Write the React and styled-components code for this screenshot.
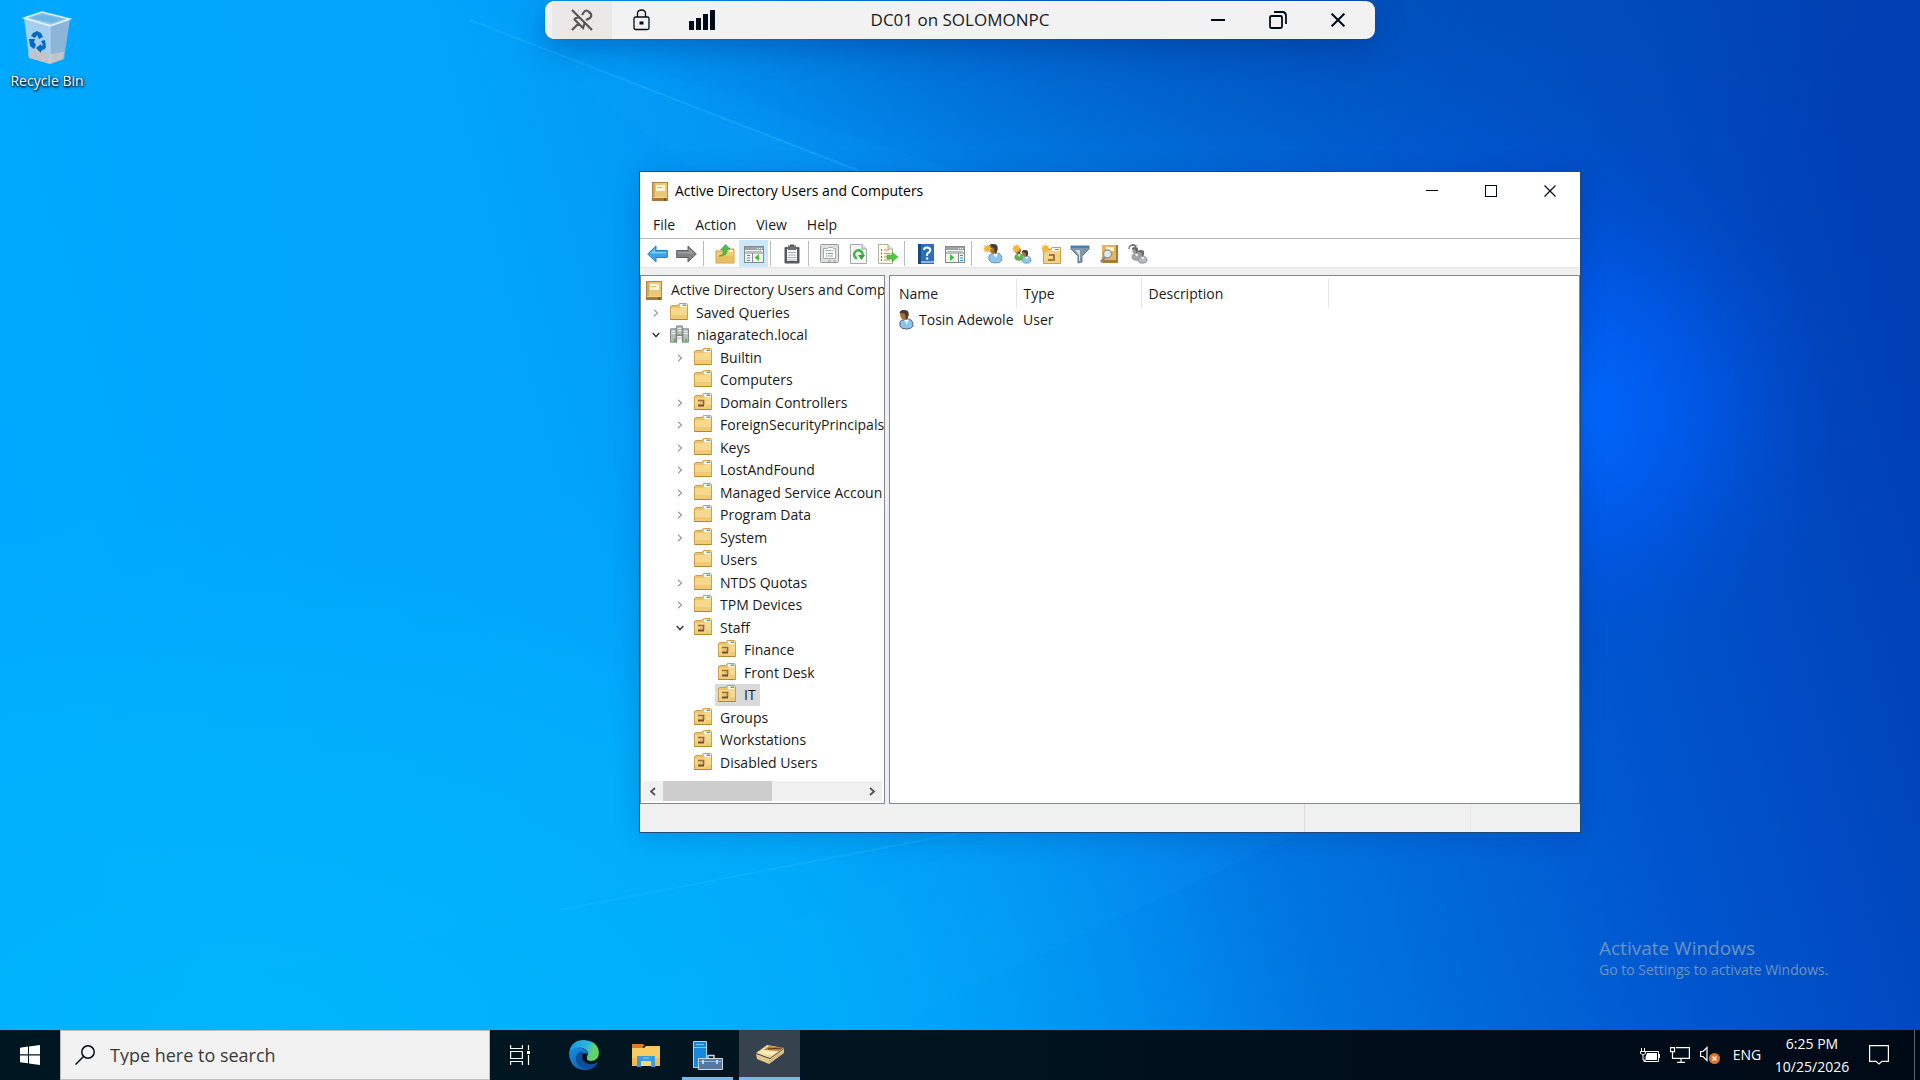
import React from "react"
import styled, { createGlobalStyle } from "styled-components"

const GlobalStyle = createGlobalStyle`
  * {
    box-sizing: border-box;
  }

  body {
    margin: 0;
    font-family: "Open Sans", "Noto Sans", sans-serif;
    font-size: 14px;
    line-height: 20px;
    color: #1a1a1a;
  }

  button,
  input {
    font: inherit;
    color: inherit;
    border: 0;
    padding: 0;
    margin: 0;
    background: none;
  }

  svg {
    display: block;
    flex: none;
  }
`

/* desktop */

const Desktop = styled.div`
  display: flex;
  flex-direction: column;
  height: 100vh;
  overflow: hidden;
  background: #0078e0;
`

const Canvas = styled.main`
  position: relative;
  flex: 1;
`

const WallpaperSvg = styled.svg`
  position: absolute;
  inset: 0;
  width: 100%;
  height: 100%;
`

const Shortcut = styled.button`
  position: absolute;
  left: 2px;
  top: 9px;
  width: 90px;
  display: flex;
  flex-direction: column;
  align-items: center;
  gap: 6px;
  color: #fff;
  text-shadow: 0 1px 2px #000, 1px 1px 3px #001c40;
`

const Watermark = styled.div`
  position: absolute;
  right: 84px;
  bottom: 50px;
  width: 237px;
  color: #6d93bb;
`

const WatermarkTitle = styled.div`
  font-size: 19px;
  line-height: 24px;
`

const WatermarkText = styled.div`
  white-space: nowrap;
`

/* connection bar */

const ConnectionBar = styled.header`
  position: absolute;
  top: 1px;
  left: 0;
  right: 0;
  margin: 0 auto;
  width: 830px;
  height: 38px;
  padding: 0 7px;
  display: flex;
  align-items: stretch;
  border-radius: 9px;
  background: #f2f2f2;
  box-shadow: 0 0 1px #234a80, 0 10px 30px rgba(0, 40, 120, 0.35);
`

const BarButton = styled.button`
  width: 60px;
  display: flex;
  align-items: center;
  justify-content: center;
  background: ${props => (props.$active ? "#eae9e8" : "none")};
`

const BarTitle = styled.div`
  flex: 1;
  text-align: center;
  font-size: 17px;
  line-height: 38px;
`

/* console window */

const Window = styled.section`
  position: absolute;
  left: 639px;
  top: 171px;
  width: 942px;
  height: 662px;
  display: flex;
  flex-direction: column;
  border: 1px solid #1c4a7c;
  background: #f0f0f0;
  box-shadow: 0 4px 24px rgba(0, 30, 90, 0.2);
`

const TitleBar = styled.div`
  display: flex;
  align-items: center;
  height: 38px;
  padding: 0 1px 0 12px;
  background: #fff;
  color: #000;
`

const TitleText = styled.h1`
  flex: 1;
  margin: 0 0 0 6px;
  font-size: 14px;
  font-weight: 400;
`

const WindowButton = styled.button`
  width: 59px;
  height: 38px;
  display: flex;
  align-items: center;
  justify-content: center;
`

const MenuBar = styled.nav`
  display: flex;
  gap: 20px;
  height: 29px;
  padding: 5px 13px 3px;
  background: #fff;
  border-bottom: 1px solid #b9b9b9;
`

const ToolBar = styled.div`
  display: flex;
  align-items: center;
  height: 29px;
  padding: 1px 0 0 3px;
  background: #fff;
  border-bottom: 1px solid #e4e4e4;
`

const ToolButton = styled.button`
  width: 29px;
  height: 27px;
  display: flex;
  align-items: center;
  justify-content: center;
  background: ${props => (props.$active ? "#cbe8f8" : "none")};
`

const Separator = styled.span`
  width: 1px;
  height: 25px;
  margin: 0 6px 0 2px;
  background: #b8bcc0;
`

const Panes = styled.div`
  flex: 1;
  min-height: 0;
  display: grid;
  grid-template-columns: 245px 1fr;
  gap: 4px;
  padding-top: 7px;
`

const Pane = styled.div`
  display: flex;
  flex-direction: column;
  min-width: 0;
  background: #fff;
  border: 1px solid #828790;
  padding: 2px 0 2px 2px;
`

const Tree = styled.ul`
  display: grid;
  grid-auto-rows: 1fr;
  height: 495px;
  margin: 1px 0 auto;
  padding: 0;
  list-style: none;
  overflow: hidden;
`

const TreeRow = styled.li`
  display: flex;
  align-items: center;
  padding-left: ${props => Math.max(0, props.$level - 1) * 24}px;
`

const Expander = styled.button`
  width: 24px;
  height: 20px;
  padding-left: 2px;
  display: flex;
  align-items: center;
  justify-content: center;
  flex: none;
`

const TreeItem = styled.button`
  display: flex;
  align-items: center;
  gap: 8px;
  height: 22px;
  padding: 0 4px 0 3px;
  white-space: nowrap;
  background: ${props => (props.$selected ? "#d9d9d9" : "none")};
`

const ScrollBar = styled.div`
  display: flex;
  height: 20px;
  margin-right: 2px;
  background: #f0f0f0;
`

const ScrollButton = styled.button`
  width: 20px;
  display: flex;
  align-items: center;
  justify-content: center;
`

const ScrollTrack = styled.div`
  flex: 1;
`

const ScrollThumb = styled.div`
  width: 55%;
  height: 100%;
  background: #cdcdcd;
`

const List = styled.table`
  width: 436px;
  table-layout: fixed;
  border-collapse: collapse;
  white-space: nowrap;
`

const HeadCell = styled.th`
  width: ${props => props.$width}px;
  height: 30px;
  padding: 2px 0 0 7px;
  font-weight: 400;
  text-align: left;
  border-right: 1px solid #e5e5e5;
`

const Cell = styled.td`
  height: 24px;
  padding: 0 0 0 7px;
`

const NameCell = styled.div`
  display: flex;
  align-items: center;
  gap: 3px;
`

const StatusBar = styled.footer`
  display: grid;
  grid-template-columns: 1fr 166px 109px;
  height: 28px;
`

const StatusCell = styled.div`
  border-right: 1px solid ${props => (props.$faint ? "#e9e9e9" : "#dcdcdc")};

  &:last-child {
    border-right: 0;
  }
`

/* taskbar */

const TaskBar = styled.footer`
  display: flex;
  height: 50px;
  background: linear-gradient(90deg, #001722 0%, #001520 45%, #000c1a 80%, #000a17 100%);
  color: #fff;
`

const StartButton = styled.button`
  width: 60px;
  display: flex;
  align-items: center;
  justify-content: center;
`

const TaskViewButton = styled(StartButton)`
  width: 63px;
  padding-right: 3px;
`

const Search = styled.label`
  display: flex;
  align-items: center;
  gap: 15px;
  width: 430px;
  padding-left: 14px;
  background: #f2f2f2;
  border: 1px solid #bdbdbd;
`

const SearchInput = styled.input`
  flex: 1;
  min-width: 0;
  font-size: 18px;
  outline: 0;

  &::placeholder {
    color: #3a3a3a;
    opacity: 1;
  }
`

const TaskButton = styled.button`
  width: 61px;
  margin-right: 1px;
  display: flex;
  align-items: center;
  justify-content: center;
  background-color: ${props => (props.$active ? "#36434e" : "transparent")};
  background-image: ${props => (props.$open ? "linear-gradient(#76b9ed, #76b9ed)" : "none")};
  background-size: ${props => (props.$active ? "100%" : "51px")} 3px;
  background-position: bottom center;
  background-repeat: no-repeat;
`

const Tray = styled.div`
  display: flex;
  align-items: center;
  margin-left: auto;
`

const TrayButton = styled.button`
  width: 30px;
  height: 50px;
  display: flex;
  align-items: center;
  justify-content: center;
`

const Language = styled.button`
  width: 44px;
  height: 50px;
`

const Clock = styled.button`
  width: 86px;
  height: 50px;
  line-height: 23px;
`

const ActionCenter = styled.button`
  width: 59px;
  height: 50px;
  display: flex;
  align-items: center;
  padding-left: 14px;
`

const ShowDesktop = styled.button`
  width: 6px;
  height: 50px;
  border-left: 1px solid #5a646c;
`

/* drawings */

const Wallpaper = () => (
  <WallpaperSvg viewBox="0 0 1920 1030" preserveAspectRatio="none" aria-hidden="true">
    <defs>
      <linearGradient id="base" x1="0" y1="0.5" x2="1" y2="0.36">
        <stop offset="0" stopColor="#00a9ff" />
        <stop offset="0.3" stopColor="#00a3fb" />
        <stop offset="0.45" stopColor="#008ff0" />
        <stop offset="0.62" stopColor="#0074e0" />
        <stop offset="0.8" stopColor="#0056cf" />
        <stop offset="1" stopColor="#003eb4" />
      </linearGradient>
      <radialGradient id="corner" cx="0.13" cy="1" r="0.55">
        <stop offset="0" stopColor="#00b6fc" />
        <stop offset="0.6" stopColor="#00b2fc" stopOpacity="0.6" />
        <stop offset="1" stopColor="#00a8ff" stopOpacity="0" />
      </radialGradient>
      <radialGradient id="glow" gradientUnits="userSpaceOnUse" cx="1575" cy="410" r="270">
        <stop offset="0" stopColor="#0068ff" />
        <stop offset="0.45" stopColor="#005cf2" stopOpacity="0.7" />
        <stop offset="1" stopColor="#004cd0" stopOpacity="0" />
      </radialGradient>
      <radialGradient id="shade" gradientUnits="userSpaceOnUse" cx="1300" cy="0" r="700" gradientTransform="matrix(1 0 0 0.3 0 0)">
        <stop offset="0" stopColor="#0048b0" stopOpacity="0.7" />
        <stop offset="1" stopColor="#0050b4" stopOpacity="0" />
      </radialGradient>
      <linearGradient id="beam" x1="0" y1="0" x2="1" y2="0">
        <stop offset="0" stopColor="#20b4ff" stopOpacity="0" />
        <stop offset="0.6" stopColor="#18a8ff" stopOpacity="0.22" />
        <stop offset="1" stopColor="#1898ff" stopOpacity="0.3" />
      </linearGradient>
    </defs>
    <rect width="1920" height="1030" fill="url(#base)" />
    <rect width="1920" height="1030" fill="url(#corner)" />
    <rect width="1920" height="1030" fill="url(#shade)" />
    <path d="M440 0 L1500 350 L1500 700 L0 1030 L0 0Z" fill="url(#beam)" opacity="0.4" />
    <path d="M480 20 L860 171 L1500 400 L700 171Z" fill="url(#beam)" />
    <path d="M470 20 L860 171" stroke="#30b4ff" strokeOpacity="0.35" strokeWidth="2" />
    <path d="M540 1030 L1000 833 L1300 833 L880 1030Z" fill="url(#beam)" opacity="0.4" />
    <path d="M560 910 L960 833" stroke="#30c0ff" strokeOpacity="0.25" strokeWidth="2" />
    <rect width="1920" height="1030" fill="url(#glow)" />
  </WallpaperSvg>
)

const RecycleBin = () => (
  <svg width="50" height="56" viewBox="0 0 50 56">
    <path d="M2 9 L20 3 L48 10 L30 17Z" fill="#8fc8ee" stroke="#d8edf8" strokeWidth="1.4" />
    <path d="M7 9 L20 5 L42 10 L30 14Z" fill="#6fb6e6" />
    <path d="M2 9 L28 17 L28 55 L7 48Z" fill="#a3d0ee" />
    <path d="M28 17 L48 10 L42 50 L28 55Z" fill="#8db5d8" />
    <path d="M6 44 L17 41 L28 45 L42 43 L41 50 L28 55 L7 49Z" fill="#c3c4c8" />
    <path d="M2 9 L28 17 L48 10" fill="none" stroke="#e4f2fa" strokeWidth="1.6" />
    <path d="M28 17V54" stroke="#bcdcf0" />
    <g fill="#0868bd">
      <path d="M11 24 L15 22 L19 24 L21 28 L17 30 L15 26 L13 29 L9 27Z" />
      <path d="M7 30 L13 30 L12 33 L14 36 L12 40 L8 37Z" />
      <path d="M23 31 L24 39 L19 42 L19 44 L14 39 L19 35 L19 37 L21 36 L19 32Z" />
    </g>
  </svg>
)

const UnpinIcon = () => (
  <svg width="22" height="22" viewBox="0 0 22 22" fill="none" stroke="#555" strokeWidth="2.2">
    <path d="M1 1 L21 21 M1 21 L7 15 M3 10 L12 19 L14 13 M3 10 L8 8 M11 6 L13 3 Q15 0 18 3 Q22 6 19 9 L15 11" />
  </svg>
)

const LockIcon = () => (
  <svg width="18" height="22" viewBox="0 0 18 22" fill="none" stroke="#000b18" strokeWidth="1.3">
    <rect x="1" y="8" width="15" height="12.500" rx="1.5" />
    <path d="M4.500 8V4 Q5 1 8.500 1 Q12 1 12.500 4V8" />
    <path d="M6.500 14H10.500" strokeWidth="3" />
  </svg>
)

const SignalIcon = () => (
  <svg width="26" height="20" viewBox="0 0 26 20" fill="#000b18">
    <path d="M0 11h5v9H0zM7 8h5v12H7zM14 4h5v16h-5zM21 0h5v20h-5z" />
  </svg>
)

const MinimizeIcon = ({ size = 12, stroke = 1 }) => (
  <svg width={size} height="12" viewBox={`0 0 ${size} 12`} stroke="#000b18" strokeWidth={stroke}>
    <path d={stroke === 1 ? `M0 5.500H${size}` : `M0 6H${size}`} />
  </svg>
)

const MaximizeIcon = () => (
  <svg width="12" height="12" viewBox="0 0 12 12" fill="none" stroke="#000b18">
    <rect x="0.500" y="0.500" width="11" height="11" />
  </svg>
)

const RestoreIcon = () => (
  <svg width="18" height="18" viewBox="0 0 18 18" fill="none" stroke="#000b18" strokeWidth="1.8">
    <rect x="1" y="5" width="12" height="12" rx="1.500" />
    <path d="M5 1H14 Q17 1.500 17 5V13" />
  </svg>
)

const CloseIcon = ({ size = 12, stroke = 1.2 }) => (
  <svg width={size} height={size} viewBox="0 0 12 12" stroke="#000b18" strokeWidth={stroke}>
    <path d="M0.500 0.500 L11.500 11.500 M11.500 0.500 L0.500 11.500" />
  </svg>
)

const BookIcon = () => (
  <svg width="17" height="19" viewBox="0 0 17 19">
    <rect x="0.500" y="0.500" width="15" height="18" fill="#eac878" stroke="#b08640" />
    <path d="M1 1h2v14H1z" fill="#d3ab60" />
    <path d="M0 15h16v4H0z" fill="#a87936" />
    <path d="M1 15h14v1H1z" fill="#f2d48c" />
    <path d="M12 16h2v3h-2z" fill="#7b5526" />
    <rect x="4" y="3" width="9" height="6" fill="#fff4d4" />
    <path d="M5 5.500h5" stroke="#d8b878" />
  </svg>
)

const FolderIcon = ({ unit }) => (
  <svg width="18" height="20" viewBox="0 1 18 20">
    <path d="M0.500 4.500 L2 3.500H8L9.500 1.500H16.500L17.500 3V17.500H0.500Z" fill="#e9c36d" stroke="#cf9f49" />
    <path d="M10 2h6.500v3H10z" fill="#fdf9e8" />
    <path d="M12.500 2.500H16V4h-3.500z" fill="#4f9fd8" />
    <path d="M1 6H10L11.500 5H17V17H1Z" fill="#f6d98e" />
    <path d="M1 13h16v4H1z" fill="#efcb78" />
    <path d="M0.500 17.500h17" stroke="#b8862f" />
    {unit && (
      <g>
        <path d="M3 7h9v9H3z" fill="#efd08a" />
        <path d="M4 8.500h5.500V13" fill="none" stroke="#9a6a30" strokeWidth="1.600" />
        <path d="M4 13.500h6" stroke="#7a4d20" strokeWidth="2" />
        <path d="M5 11h3" stroke="#dcb468" />
      </g>
    )}
  </svg>
)

const DomainIcon = () => (
  <svg width="19" height="20" viewBox="0 0 20 20">
    <path d="M7 0.500h6v10H7z" fill="#b4b8ba" stroke="#7c8082" />
    <path d="M8 3h4M8 5.500h4" stroke="#f4f6f6" />
    <path d="M0.500 3.500h6v14h-6zM13.500 3.500h6v14h-6z" fill="#b8bcbe" stroke="#808486" />
    <path d="M1.500 6h4M1.500 8.500h4M14.500 6h4M14.500 8.500h4" stroke="#f8f8f8" />
    <path d="M7 9v9M13 9v9" stroke="#6a6e70" />
    <path d="M8 12h4l1 3H7z" fill="#d7dada" />
    <path d="M4 14h2v3H4zM9 9h2v2H9zM16 14h2v3h-2z" fill="#3fc43c" />
  </svg>
)

const Chevron = ({ open }) =>
  open ? (
    <svg width="8" height="6" viewBox="0 0 8 6" fill="none" stroke="#404040" strokeWidth="1.600">
      <path d="M0.700 1 L4 4.500 L7.300 1" />
    </svg>
  ) : (
    <svg width="6" height="8" viewBox="0 0 6 8" fill="none" stroke="#a0a0a0" strokeWidth="1.300">
      <path d="M1 0.700 L4.500 4 L1 7.300" />
    </svg>
  )

const ScrollArrow = ({ right }) => (
  <svg width="7" height="9" viewBox="0 0 7 9" fill="none" stroke="#505050" strokeWidth="1.800">
    <path d={right ? "M1 1 L5 4.500 L1 8" : "M5 1 L1 4.500 L5 8"} />
  </svg>
)

const BackIcon = () => (
  <svg width="21" height="18" viewBox="0 0 21 18">
    <path d="M0.700 9 L9 1V5.500H20.300V12.500H9V17Z" fill="#39a5e8" stroke="#2a7fc0" />
    <path d="M3 8.500 L8 4V7H19V8.500Z" fill="#7ccbf6" />
  </svg>
)

const ForwardIcon = () => (
  <svg width="21" height="18" viewBox="0 0 21 18">
    <path d="M20.300 9 L12 1V5.500H0.700V12.500H12V17Z" fill="#808486" stroke="#5e6264" />
    <path d="M2 7h11V4L18 8.500H2Z" fill="#9c9fa1" />
  </svg>
)

const UpIcon = () => (
  <svg width="20" height="20" viewBox="0 0 20 20">
    <path d="M1 7h7l2-2h9v14H1z" fill="#f1cd78" stroke="#cf9d42" />
    <path d="M14 6h4v2h-4z" fill="#fff6d8" />
    <path d="M2 12h16v6H2z" fill="#e9bf62" />
    <path d="M4 12 Q9 11 8.500 6H5.500L10.500 0.500L15 5H12 Q12.500 13 4 12Z" fill="#4fc044" stroke="#2f9a36" strokeWidth="0.600" />
  </svg>
)

const Panel = () => (
  <g>
    <rect x="0.500" y="2.500" width="19" height="16" fill="#f4f5f5" stroke="#84898c" />
    <path d="M1 3h18v3H1z" fill="#9da2a5" />
    <path d="M2 7.500h16" stroke="#b6babc" />
    <path d="M13 4.500h1M15 4.500h1M17 4.500h1" stroke="#fff" />
    <path d="M1 9h18" stroke="#84898c" />
  </g>
)

const TreePaneIcon = () => (
  <svg width="20" height="20" viewBox="0 0 20 20">
    <Panel />
    <path d="M8.500 9v9" stroke="#84898c" />
    <path d="M3 11.500h3M3 14h3M3 16.500h3" stroke="#4489c4" />
    <path d="M15 10v7l-4.500-3.500z" fill="#44bf3b" />
  </svg>
)

const ActionPaneIcon = () => (
  <svg width="20" height="20" viewBox="0 0 20 20">
    <Panel />
    <path d="M13.500 9v9" stroke="#84898c" />
    <path d="M15 11.500h3M15 14h3M15 16.500h3" stroke="#4489c4" />
    <path d="M5 10v7l4.500-3.500z" fill="#44bf3b" />
  </svg>
)

const ClipboardIcon = () => (
  <svg width="16" height="20" viewBox="0 0 16 20">
    <rect x="0.500" y="3" width="15" height="16.500" rx="1" fill="#565b60" />
    <path d="M3 5h10v12H3z" fill="#fff" />
    <path d="M4 1.500h8V6H4z" fill="#6c7175" />
    <path d="M6 0.500h4v2H6z" fill="#4c5156" />
    <path d="M4 8.500h8M4 11h8M4 13.500h8M4 16h8" stroke="#a6acb0" />
  </svg>
)

const PropertiesIcon = () => (
  <svg width="19" height="20" viewBox="0 0 19 20" fill="none" stroke="#96999b">
    <rect x="0.500" y="0.500" width="18" height="18" rx="1" fill="#dfe1e1" />
    <path d="M3.500 4.500h4l1-1h4l1 1h2v10h-12z" fill="#fff" stroke="#a5a8aa" />
    <path d="M5 6.500h9" stroke="#b8bbbd" />
    <path d="M6 9.500h1M6 12h1" stroke="#3078b8" />
    <path d="M8 9.500h5M8 12h5" />
    <path d="M8 17h3M13 17h3" stroke="#999" />
  </svg>
)

const RefreshIcon = () => (
  <svg width="17" height="20" viewBox="0 0 17 20">
    <path d="M0.500 0.500H12L16.500 5V19.500H0.500Z" fill="#f5f6f6" stroke="#a7aaac" />
    <path d="M12 0.500V5h4.500" fill="#dcdede" stroke="#a7aaac" />
    <path d="M7 14.500 A4.200 4.200 0 1 1 12.500 11" fill="none" stroke="#43b548" strokeWidth="2.600" />
    <path d="M8 11h7l-3.500 5z" fill="#2fa83a" />
  </svg>
)

const ExportIcon = () => (
  <svg width="20" height="20" viewBox="0 0 20 20">
    <path d="M0.500 0.500H10L14.500 5V19.500H0.500Z" fill="#fff8e5" stroke="#b4b0a6" />
    <path d="M10 0.500V5h4.500" fill="#e2dfd8" stroke="#b4b0a6" />
    <path d="M3 6h1M3 9.500h1M3 13h1M3 16h1" stroke="#555" strokeWidth="1.400" />
    <path d="M6 6h5M6 9.500h6M6 13h5M6 16h6" stroke="#b0a078" />
    <path d="M9 11h5V8l6 5-6 5v-3H9z" fill="#53c544" stroke="#37a238" strokeWidth="0.500" />
  </svg>
)

const HelpIcon = () => (
  <svg width="16" height="20" viewBox="0 0 16 20">
    <path d="M0 0h16v20H0z" fill="#2c6eb8" />
    <path d="M0 0h3v20H0z" fill="#174986" />
    <path d="M3 17h13v2H3z" fill="#8db8e0" />
    <path d="M6 6 Q6 3.500 9 3.500 Q12.300 3.500 12.300 6 Q12.300 8 10 9 Q9 9.500 9 12" fill="none" stroke="#fff" strokeWidth="2" />
    <path d="M8 13.500h2.200v2H8z" fill="#fff" />
  </svg>
)

const Star = () => (
  <path
    d="M4.500 0 L5.500 2 L8 1.200 L7.200 3.500 L9 4.700 L7.200 5.700 L7.800 8 L5.500 7.300 L4.500 9 L3.500 7.300 L1 8 L1.800 5.700 L0 4.700 L1.800 3.500 L1 1.200 L3.500 2Z"
    fill="#f5b53c"
  />
)

const Person = ({ shirt = "#8fc4ea", edge = "#5288b4", hair = "#3f3f40", skin = "#a86e34" }) => (
  <g>
    <path d="M3 16 Q2 9 7 10 L12 9 Q16 10 16 16 Q14 19.500 9 19 Q4 19 3 16Z" fill={shirt} stroke={edge} strokeWidth="0.800" />
    <path d="M7 10 L10 14 L12 9.500Z" fill="#eef6fb" />
    <path d="M3 2 Q7 -1 11 1 Q12.500 5 10.500 9 L7 10 Q2.500 8 3 2Z" fill={skin} />
    <path d="M2.500 3 Q3 -0.500 7 0 Q12 0 11.500 5 L10 9.500 L8.500 8 Q9 4 7 3.500Z" fill={hair} />
  </g>
)

const UserIcon = () => (
  <svg width="17" height="20" viewBox="2 0 17 20">
    <Person edge="#34485a" />
  </svg>
)

const NewUserIcon = () => (
  <svg width="20" height="20" viewBox="0 0 20 20">
    <g transform="translate(3 0)">
      <Person />
    </g>
    <Star />
  </svg>
)

const NewGroupIcon = () => (
  <svg width="20" height="20" viewBox="0 0 20 20">
    <g transform="translate(1 4) scale(0.650)">
      <Person shirt="#64b548" edge="#3f8c34" />
    </g>
    <g transform="translate(8 6) scale(0.700)">
      <Person />
    </g>
    <Star />
  </svg>
)

const NewUnitIcon = () => (
  <svg width="20" height="20" viewBox="0 0 20 20">
    <path d="M2.500 5.500H10L11 3.500H19.500V19.500H2.500Z" fill="#f3d384" stroke="#cf9f49" />
    <path d="M11 4h8v3h-8z" fill="#fff8e0" />
    <path d="M14 5.500h4" stroke="#4f9fd8" />
    <path d="M8 11h5v4M7 16h7" fill="none" stroke="#8a5c28" strokeWidth="1.600" />
    <Star />
  </svg>
)

const FilterIcon = () => (
  <svg width="20" height="20" viewBox="0 0 20 20">
    <path d="M1 2H19V5L12 12V18L8 19V12L1 5Z" fill="#8098aa" stroke="#65798a" />
    <path d="M1 2h18v2H1z" fill="#4c7faf" />
    <path d="M5 6h5v11H9v-6z" fill="#d5e0e8" />
  </svg>
)

const FindIcon = () => (
  <svg width="20" height="20" viewBox="0 0 20 20">
    <path d="M3 1h16v18H3z" fill="#e1b65c" />
    <path d="M3 16h16v3H3zM17 1h2v18h-2z" fill="#a97a32" />
    <path d="M7 3h8v4H7z" fill="#fff4d2" />
    <path d="M2 18 L6 13" stroke="#83878a" strokeWidth="2.600" />
    <circle cx="8.500" cy="10" r="4" fill="#dfe9f0" stroke="#8d9599" strokeWidth="1.400" />
  </svg>
)

const AddToGroupIcon = () => (
  <svg width="20" height="20" viewBox="0 0 20 20">
    <g transform="translate(2 3) scale(0.700)">
      <Person shirt="#a4a8aa" edge="#777" hair="#666" skin="#999" />
    </g>
    <g transform="translate(8 6) scale(0.700)">
      <Person shirt="#b4b8ba" edge="#777" hair="#6a6a6a" skin="#999" />
    </g>
    <path d="M1 5 Q1 1 6 1 M4 0 L8 2 L5 5" fill="none" stroke="#6e7274" strokeWidth="1.400" />
  </svg>
)

const WindowsLogo = () => (
  <svg width="20" height="20" viewBox="0 0 20 20" fill="#fff">
    <path d="M0 2.800 L8 1.600V9.300H0ZM9 1.400 L20 0V9.300H9ZM0 10.500H8V18.300L0 17.200ZM9 10.500H20V20L9 18.500Z" />
  </svg>
)

const SearchIcon = () => (
  <svg width="20" height="20" viewBox="0 0 20 20" fill="none" stroke="#000b18" strokeWidth="1.500">
    <circle cx="13" cy="7" r="6.200" />
    <path d="M8.500 11.500 L0.500 19.500" />
  </svg>
)

const TaskViewIcon = () => (
  <svg width="20" height="20" viewBox="0 0 20 20" fill="none" stroke="#fff" strokeWidth="1.200">
    <path d="M0.600 0V3.500H12.400V0M0.600 20V16.500H12.400V20M0.600 6.500H12.400V13.500H0.600ZM18.500 0V5M18.500 10V20" />
    <path d="M17 6h3v3h-3z" fill="#fff" stroke="none" />
  </svg>
)

const EdgeIcon = () => (
  <svg width="32" height="32" viewBox="0 0 32 32">
    <defs>
      <linearGradient id="edgeTop" x1="0" y1="0.300" x2="1" y2="0.600">
        <stop offset="0" stopColor="#159be0" />
        <stop offset="0.550" stopColor="#2fb4dc" />
        <stop offset="0.800" stopColor="#62d36a" />
      </linearGradient>
      <linearGradient id="edgeLow" x1="0" y1="0" x2="1" y2="1">
        <stop offset="0" stopColor="#1a8ee0" />
        <stop offset="1" stopColor="#0d55a8" />
      </linearGradient>
    </defs>
    <path d="M1 14 Q3 1 16 1 Q30 2 31 14 Q30 22 23 22 Q18 22 19 18 Q22 12 15 9 Q6 8 1 14Z" fill="url(#edgeTop)" />
    <path d="M1 14 Q6 7 14 9 Q20 11 19 15 Q14 12 13 18 Q14 26 24 26 Q28 25 30 23 Q25 32 16 31 Q2 30 1 14Z" fill="url(#edgeLow)" />
    <path d="M13 12 Q5 17 9 24 Q13 31 20 30 Q27 29 30 23 Q24 27 18 24 Q12 20 15 14Z" fill="#0c4f9c" />
  </svg>
)

const ExplorerIcon = () => (
  <svg width="28" height="24" viewBox="0 0 28 24">
    <path d="M0 1h11l2 2h-2v3H0z" fill="#d77d2c" />
    <path d="M0 5h12l2-2h14v20H0z" fill="#f8cb62" />
    <path d="M0 15h28v8H0z" fill="#f2b94c" />
    <path d="M5 13h18v11h-4v-6H9v6H5z" fill="#3d9bdc" />
    <path d="M9 18h10v5H9z" fill="#f8d67c" />
    <path d="M11 15h6" stroke="#8fd0f4" />
  </svg>
)

const ServerManagerIcon = () => (
  <svg width="30" height="30" viewBox="0 0 30 30">
    <path d="M0.500 1.500h13v26h-13z" fill="#1588dc" stroke="#a5d8f6" />
    <path d="M1 7.500h12M3 4.500h8" stroke="#7cc6f4" />
    <path d="M15 18v-2.500h6V18" fill="none" stroke="#ccd5dd" strokeWidth="1.500" />
    <path d="M5.500 18.500h24v11h-24z" fill="#55789f" stroke="#d0dae4" />
    <path d="M7 21.500h21" stroke="#9eb4ca" />
    <path d="M10 20v4M24 20v4" stroke="#e8edf2" strokeWidth="1.500" />
  </svg>
)

const DirectoryIcon = () => (
  <svg width="30" height="20" viewBox="0 0 30 20">
    <path d="M1 9 L15 14 L14 19 L2 14Z" fill="#e6c684" />
    <path d="M15 14 L29 4 L29 8 L14 19Z" fill="#f2dda6" />
    <path d="M15 15.500 L29 5.800 M15 17 L29 7.200" stroke="#b99353" strokeWidth="0.700" />
    <path d="M1 8 L12 0 L29 3 L15 13Z" fill="#f7d998" />
    <path d="M9 5 L14 1 L28 3 L24 6Z" fill="#bd7e3c" />
    <path d="M8 5 L22 7 L18 10 L4 8Z" fill="#ffedbd" />
    <path d="M13 4 L27 3" stroke="#5b3518" />
  </svg>
)

const BatteryIcon = () => (
  <svg width="20" height="14" viewBox="0 0 20 14">
    <path d="M5 3.500h13.500v10H4V9" fill="none" stroke="#fff" />
    <path d="M7 5h10v7H5.500V9z" fill="#fff" />
    <path d="M18.500 6h1.500v4h-1.500z" fill="#fff" />
    <path d="M1.500 0v3M4.500 0v3M0.500 3.500h5v2q-2.500 3-5 0zM3 7v5h3" fill="#000c18" stroke="#fff" />
  </svg>
)

const NetworkIcon = () => (
  <svg width="20" height="18" viewBox="0 0 20 18" fill="none" stroke="#fff" strokeWidth="1.200">
    <path d="M6 1.600H19.400V12.400H2.500V7M11 12.500V16M7 16.400H15" />
    <path d="M0.500 1.600h4v4h-4zM2.500 5v2" />
  </svg>
)

const VolumeIcon = () => (
  <svg width="20" height="18" viewBox="0 0 20 18" fill="none" stroke="#fff" strokeWidth="1.200">
    <path d="M0.600 5.500H3L7 1.500V14.500L3 10.500H0.600Z" />
    <circle cx="14.500" cy="12.500" r="5.500" fill="#d8762c" stroke="none" />
    <path d="M12.500 10.500 L16.500 14.500 M16.500 10.500 L12.500 14.500" strokeWidth="1.400" />
  </svg>
)

const NotificationIcon = () => (
  <svg width="20" height="20" viewBox="0 0 20 20" fill="none" stroke="#fff" strokeWidth="1.200">
    <path d="M0.600 0.600H19.400V16.400H13L10 19L7 16.400H0.600Z" />
  </svg>
)

/* content */

const menus = ["File", "Action", "View", "Help"]

const tools = [
  [
    { label: "Back", icon: BackIcon },
    { label: "Forward", icon: ForwardIcon },
  ],
  [
    { label: "Up one level", icon: UpIcon },
    { label: "Show or hide console tree", icon: TreePaneIcon, active: true },
  ],
  [{ label: "Paste", icon: ClipboardIcon }],
  [
    { label: "Properties", icon: PropertiesIcon },
    { label: "Refresh", icon: RefreshIcon },
    { label: "Export list", icon: ExportIcon },
  ],
  [
    { label: "Help topics", icon: HelpIcon },
    { label: "Show or hide action pane", icon: ActionPaneIcon },
  ],
  [
    { label: "New user", icon: NewUserIcon },
    { label: "New group", icon: NewGroupIcon },
    { label: "New organizational unit", icon: NewUnitIcon },
    { label: "Filter", icon: FilterIcon },
    { label: "Find", icon: FindIcon },
    { label: "Add to a group", icon: AddToGroupIcon },
  ],
]

const nodes = [
  { name: "Active Directory Users and Comp", level: 0, kind: "root" },
  { name: "Saved Queries", level: 1, state: "closed" },
  { name: "niagaratech.local", level: 1, state: "open", kind: "domain" },
  { name: "Builtin", level: 2, state: "closed" },
  { name: "Computers", level: 2 },
  { name: "Domain Controllers", level: 2, state: "closed", kind: "unit" },
  { name: "ForeignSecurityPrincipals", level: 2, state: "closed" },
  { name: "Keys", level: 2, state: "closed" },
  { name: "LostAndFound", level: 2, state: "closed" },
  { name: "Managed Service Accoun", level: 2, state: "closed" },
  { name: "Program Data", level: 2, state: "closed" },
  { name: "System", level: 2, state: "closed" },
  { name: "Users", level: 2 },
  { name: "NTDS Quotas", level: 2, state: "closed" },
  { name: "TPM Devices", level: 2, state: "closed" },
  { name: "Staff", level: 2, state: "open", kind: "unit" },
  { name: "Finance", level: 3, kind: "unit" },
  { name: "Front Desk", level: 3, kind: "unit" },
  { name: "IT", level: 3, kind: "unit", selected: true },
  { name: "Groups", level: 2, kind: "unit" },
  { name: "Workstations", level: 2, kind: "unit" },
  { name: "Disabled Users", level: 2, kind: "unit" },
]

const NodeIcon = ({ kind }) => {
  if (kind === "root") return <BookIcon />
  if (kind === "domain") return <DomainIcon />
  return <FolderIcon unit={kind === "unit"} />
}

const Node = ({ node }) => (
  <TreeRow $level={node.level}>
    {node.level > 0 && (
      <Expander
        as={node.state ? "button" : "span"}
        aria-label={node.state ? `Toggle ${node.name}` : undefined}
      >
        {node.state && <Chevron open={node.state === "open"} />}
      </Expander>
    )}
    <TreeItem $selected={node.selected}>
      <NodeIcon kind={node.kind} />
      {node.name}
    </TreeItem>
  </TreeRow>
)

const Console = () => (
  <Window>
    <TitleBar>
      <BookIcon />
      <TitleText>Active Directory Users and Computers</TitleText>
      <WindowButton aria-label="Minimize">
        <MinimizeIcon />
      </WindowButton>
      <WindowButton aria-label="Maximize">
        <MaximizeIcon />
      </WindowButton>
      <WindowButton aria-label="Close">
        <CloseIcon />
      </WindowButton>
    </TitleBar>
    <MenuBar>
      {menus.map(menu => (
        <button key={menu}>{menu}</button>
      ))}
    </MenuBar>
    <ToolBar>
      {tools.map((group, i) => (
        <React.Fragment key={i}>
          {i > 0 && <Separator />}
          {group.map(({ label, icon: Icon, active }) => (
            <ToolButton key={label} aria-label={label} $active={active}>
              <Icon />
            </ToolButton>
          ))}
        </React.Fragment>
      ))}
    </ToolBar>
    <Panes>
      <Pane>
        <Tree>
          {nodes.map(node => (
            <Node key={node.name} node={node} />
          ))}
        </Tree>
        <ScrollBar>
          <ScrollButton aria-label="Scroll left">
            <ScrollArrow />
          </ScrollButton>
          <ScrollTrack>
            <ScrollThumb />
          </ScrollTrack>
          <ScrollButton aria-label="Scroll right">
            <ScrollArrow right />
          </ScrollButton>
        </ScrollBar>
      </Pane>
      <Pane>
        <List>
          <thead>
            <tr>
              <HeadCell $width={124}>Name</HeadCell>
              <HeadCell $width={125}>Type</HeadCell>
              <HeadCell $width={187}>Description</HeadCell>
            </tr>
          </thead>
          <tbody>
            <tr>
              <Cell>
                <NameCell>
                  <UserIcon />
                  Tosin Adewole
                </NameCell>
              </Cell>
              <Cell>User</Cell>
              <Cell />
            </tr>
          </tbody>
        </List>
      </Pane>
    </Panes>
    <StatusBar>
      <StatusCell />
      <StatusCell $faint />
      <StatusCell />
    </StatusBar>
  </Window>
)

const App = () => (
  <Desktop>
    <GlobalStyle />
    <Canvas>
      <Wallpaper />
      <Shortcut>
        <RecycleBin />
        Recycle Bin
      </Shortcut>
      <Watermark>
        <WatermarkTitle>Activate Windows</WatermarkTitle>
        <WatermarkText>Go to Settings to activate Windows.</WatermarkText>
      </Watermark>
      <Console />
      <ConnectionBar>
        <BarButton $active aria-label="Unpin">
          <UnpinIcon />
        </BarButton>
        <BarButton aria-label="Security">
          <LockIcon />
        </BarButton>
        <BarButton aria-label="Connection quality">
          <SignalIcon />
        </BarButton>
        <BarTitle>DC01 on SOLOMONPC</BarTitle>
        <BarButton aria-label="Minimize session">
          <MinimizeIcon size={14} stroke={2} />
        </BarButton>
        <BarButton aria-label="Restore session">
          <RestoreIcon />
        </BarButton>
        <BarButton aria-label="Close session">
          <CloseIcon size={14} stroke={1.7} />
        </BarButton>
      </ConnectionBar>
    </Canvas>
    <TaskBar>
      <StartButton aria-label="Start">
        <WindowsLogo />
      </StartButton>
      <Search>
        <SearchIcon />
        <SearchInput placeholder="Type here to search" aria-label="Search" />
      </Search>
      <TaskViewButton aria-label="Task View">
        <TaskViewIcon />
      </TaskViewButton>
      <TaskButton aria-label="Microsoft Edge">
        <EdgeIcon />
      </TaskButton>
      <TaskButton aria-label="File Explorer">
        <ExplorerIcon />
      </TaskButton>
      <TaskButton $open aria-label="Server Manager">
        <ServerManagerIcon />
      </TaskButton>
      <TaskButton $open $active aria-label="Directory console">
        <DirectoryIcon />
      </TaskButton>
      <Tray>
        <TrayButton aria-label="Battery">
          <BatteryIcon />
        </TrayButton>
        <TrayButton aria-label="Network">
          <NetworkIcon />
        </TrayButton>
        <TrayButton aria-label="Volume">
          <VolumeIcon />
        </TrayButton>
        <Language>ENG</Language>
        <Clock>
          <div>6:25 PM</div>
          <div>10/25/2026</div>
        </Clock>
        <ActionCenter aria-label="Notifications">
          <NotificationIcon />
        </ActionCenter>
        <ShowDesktop aria-label="Show desktop" />
      </Tray>
    </TaskBar>
  </Desktop>
)

export default App
